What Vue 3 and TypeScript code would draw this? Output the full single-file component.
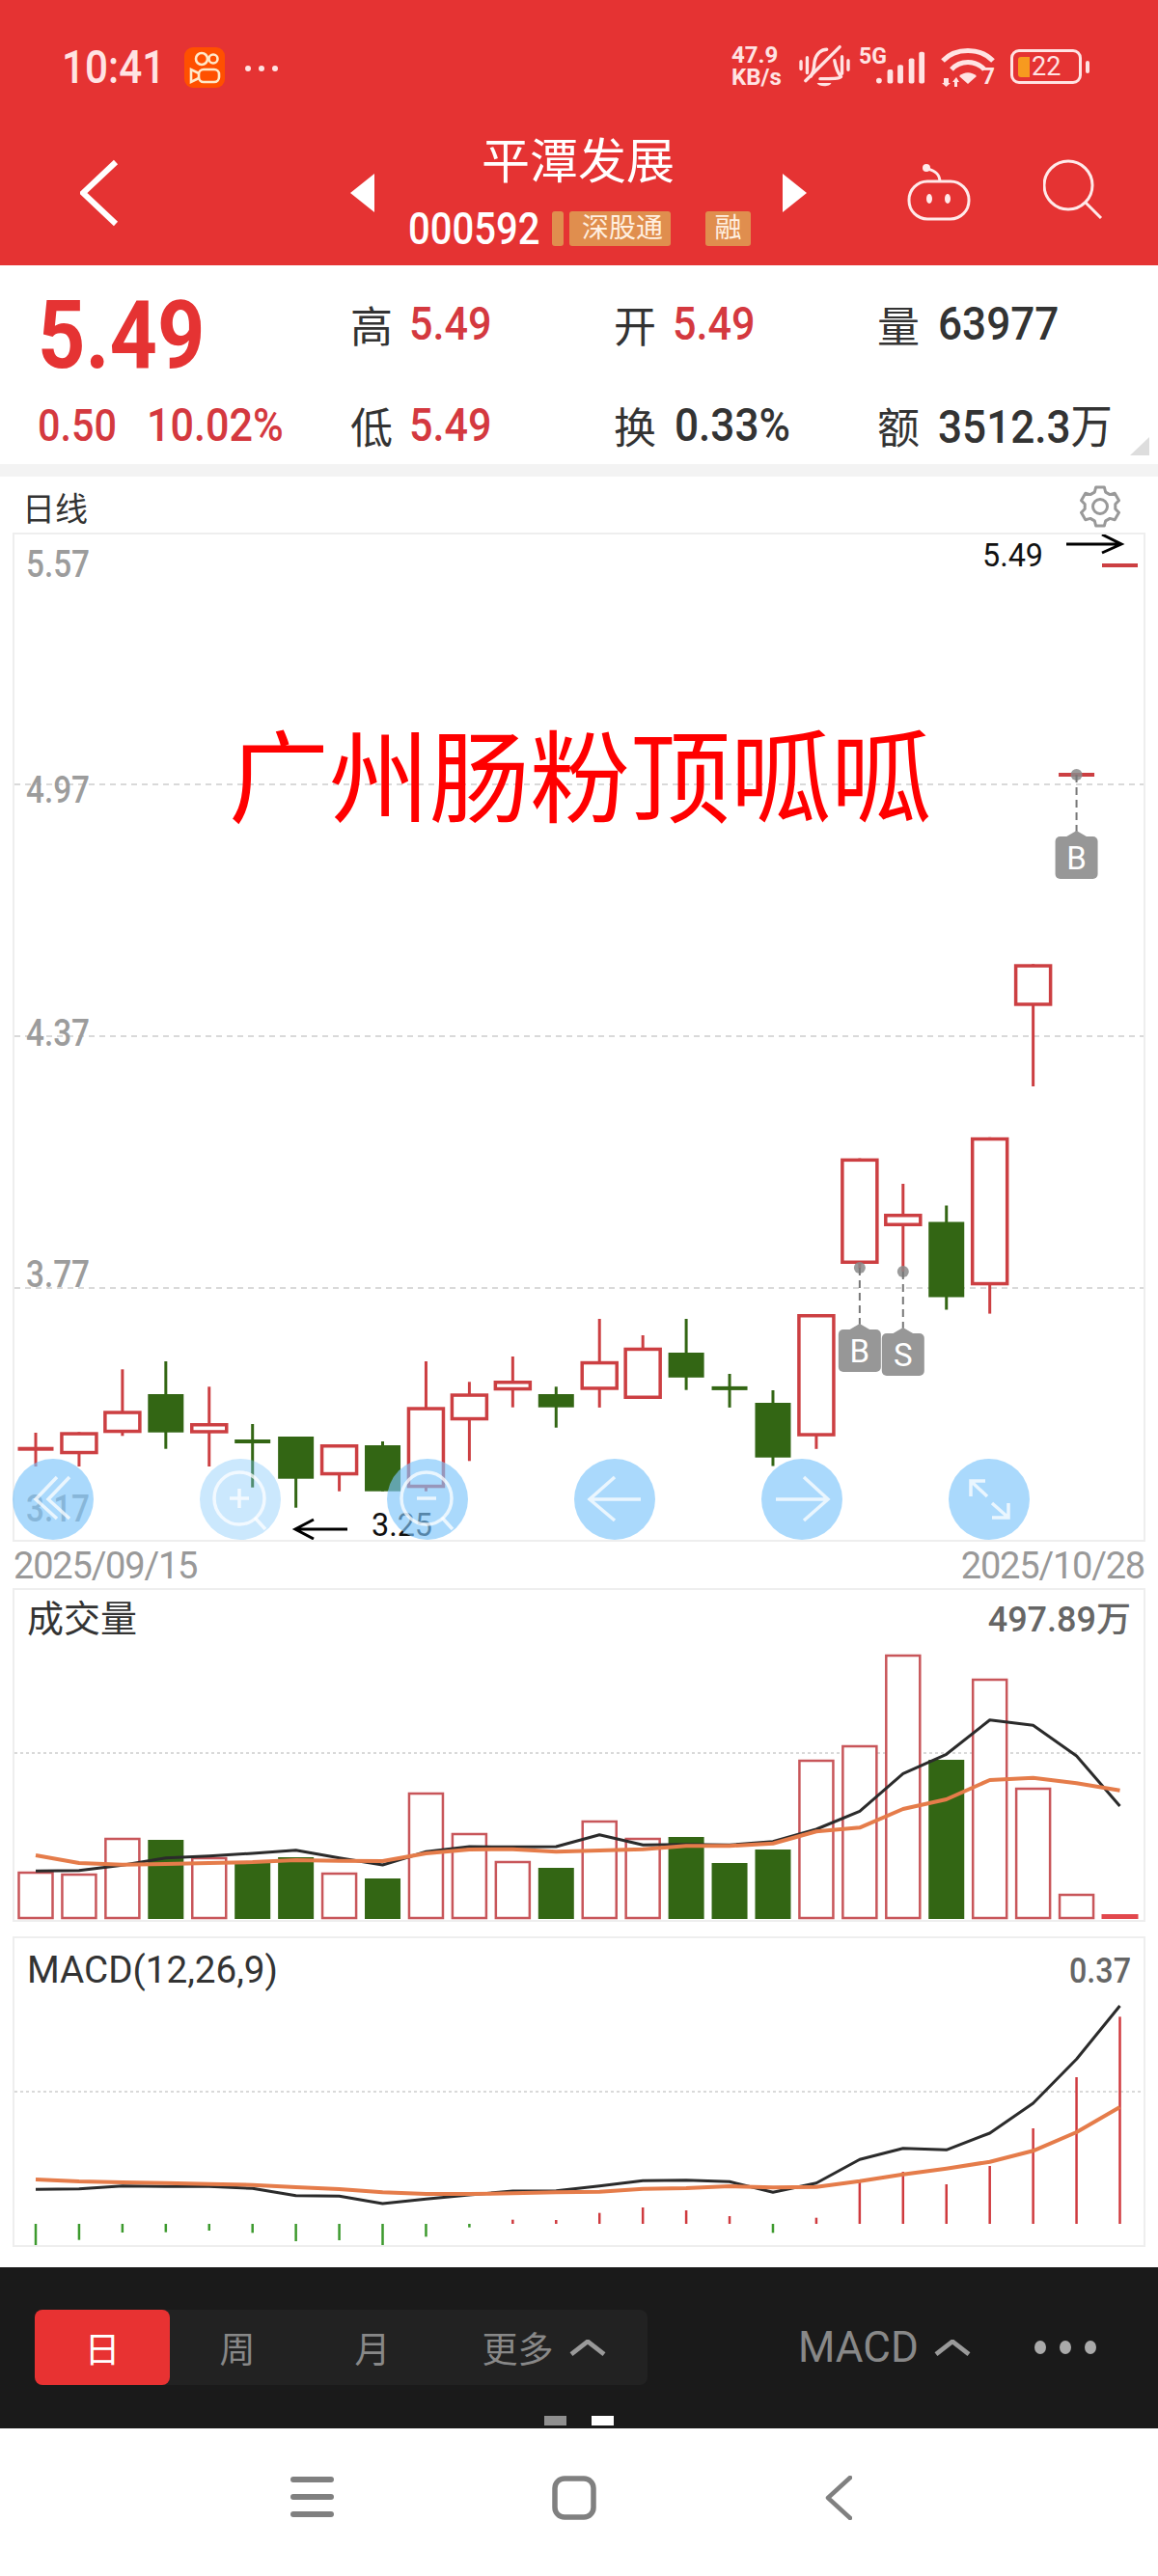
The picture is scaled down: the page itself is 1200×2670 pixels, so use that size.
<template>
  <div class="screen">
    <header class="top">
      <div class="status">
        <div class="status-left">
          <span class="time">10:41</span>
          <svg class="ks" viewBox="0 0 42 42">
            <rect width="42" height="42" rx="9" fill="#ff5000" />
            <g fill="none" stroke="#ffe9c9" stroke-width="2.6">
              <circle cx="18" cy="12" r="6" />
              <circle cx="30" cy="12" r="4.500" />
              <rect x="15" y="23" width="21" height="13" rx="5" />
              <path d="M15 27 L7 23 V36 L15 32" />
            </g>
          </svg>
          <span class="more-dots"><i></i><i></i><i></i></span>
        </div>
        <div class="status-right">
          <div class="speed"><span>47.9</span><span>KB/s</span></div>
          <svg class="bell" viewBox="235 35 160 135">
            <g fill="none" stroke="#ffe3e3" stroke-width="10" stroke-linecap="round" stroke-linejoin="round">
              <path d="M241 87V110M260 75V122M386 84V112M367 72V124" />
              <path d="M272 132C284 112 280 100 283 85C288 62 304 50 320 50M344 84C348 108 354 122 364 134C358 140 340 140 300 140" />
              <path d="M255 146L360 42" />
            </g>
            <path d="M290 153H334C330 166 296 166 290 153Z" fill="#ffe3e3" />
          </svg>
          <div class="net">
            <span class="five-g">5G</span>
            <svg class="bars" viewBox="0 0 54 36">
              <rect x="0" y="28" width="6" height="6" rx="3" />
              <rect x="12" y="19" width="6" height="15" rx="2" />
              <rect x="23" y="14" width="6" height="20" rx="2" />
              <rect x="35" y="7" width="6" height="27" rx="2" />
              <rect x="46" y="0" width="6" height="34" rx="2" />
            </svg>
          </div>
          <div class="wifi-wrap">
            <svg class="wifi" viewBox="0 0 56 42">
              <g fill="none" stroke="#ffe3e3" stroke-width="5">
                <path d="M2 15C15 1 41 1 54 15" />
                <path d="M11 24C20 14 36 14 45 24" />
              </g>
              <path d="M19 31C24 26 32 26 37 31L28 39Z" fill="#ffe3e3" />
              <path d="M3 33H8V38H10L5.500 42L1 38H3ZM14 42V37H12L16 32L19 37H17V42Z" fill="#ffe3e3" />
            </svg>
            <span class="wifi-num">7</span>
          </div>
          <div class="battery">
            <div class="cell"><i></i><span>22</span></div>
            <b></b>
          </div>
        </div>
      </div>
      <nav class="nav">
        <svg class="back" viewBox="0 0 40 70">
          <path d="M37 3L3 35L37 67" fill="none" stroke="#fff" stroke-width="6" />
        </svg>
        <span class="tri left"></span>
        <div class="title">
          <div class="name">平潭发展</div>
          <div class="code-row">
            <span class="code"><span>000592</span></span>
            <span class="tag sliver"></span>
            <span class="tag long">深股通</span>
            <span class="tag short">融</span>
          </div>
        </div>
        <span class="tri right"></span>
        <svg class="robot" viewBox="0 0 66 62">
          <g fill="none" stroke="#ffeaea" stroke-width="3">
            <path d="M34 22C34 14 30 10 21 8" />
            <rect x="2" y="21" width="62" height="39" rx="19" />
          </g>
          <circle cx="20" cy="7" r="4" fill="#ffeaea" />
          <ellipse cx="23" cy="39" rx="3" ry="5" fill="#ffeaea" />
          <ellipse cx="42" cy="39" rx="3" ry="5" fill="#ffeaea" />
        </svg>
        <svg class="search" viewBox="0 0 62 62">
          <g fill="none" stroke="#ffeaea" stroke-width="3">
            <ellipse cx="26" cy="27" rx="25" ry="25" />
            <path d="M44 45L60 61" />
          </g>
        </svg>
      </nav>
    </header>

    <section class="stats">
      <div class="price"><span class="num big">5.49</span></div>
      <div class="stat"><span class="lbl">高</span><span class="num up">5.49</span></div>
      <div class="stat"><span class="lbl">开</span><span class="num up">5.49</span></div>
      <div class="stat"><span class="lbl">量</span><span class="num dark">63977</span></div>
      <div class="change">
        <span class="num up chg">0.50</span>
        <span class="num up">10.02%</span>
      </div>
      <div class="stat"><span class="lbl">低</span><span class="num up">5.49</span></div>
      <div class="stat"><span class="lbl">换</span><span class="num dark">0.33%</span></div>
      <div class="stat"><span class="lbl">额</span><span class="num dark">3512.3<em>万</em></span></div>
      <span class="corner"></span>
    </section>

    <div class="band"></div>

    <div class="chart-head">
      <span>日线</span>
      <svg class="gear" viewBox="0 0 44 44">
        <path :d="gearPath" fill="none" stroke="#999" stroke-width="3" stroke-linejoin="round" />
        <circle cx="22" cy="22" r="7.500" fill="none" stroke="#999" stroke-width="3" />
      </svg>
    </div>

    <div class="box kline">
      <svg class="plot" width="1170" height="1042" viewBox="15 554 1170 1042">
        <line v-for="y in klineGrid" :key="y" x1="15" x2="1185" :y1="y" :y2="y" class="grid" />
        <text v-for="l in priceLabels" :key="l.t" x="27" :y="l.y" class="axis" textLength="66" lengthAdjust="spacingAndGlyphs">{{ l.t }}</text>
        <g v-for="c in candles" :key="c.i">
          <line :x1="c.x" :x2="c.x" :y1="c.hi" :y2="c.lo" :stroke="c.color" stroke-width="3" />
          <rect v-if="c.up && !c.flat" :x="c.x - 18" :y="c.top + 1.75" width="36" :height="c.bottom - c.top - 3.5" fill="#fff" :stroke="c.color" stroke-width="3.500" />
          <rect v-else-if="!c.flat" :x="c.x - 18.5" :y="c.top" width="37" :height="c.bottom - c.top" :fill="c.color" />
          <rect v-else :x="c.x - 18.5" :y="c.top - 2" width="37" height="4" :fill="c.color" />
        </g>
        <g v-for="m in marks" :key="m.x">
          <circle :cx="m.x" :cy="m.dot" r="6" fill="#8a8a8a" fill-opacity="0.85" />
          <line :x1="m.x" :x2="m.x" :y1="m.dot" :y2="m.tag" class="lead" />
          <path :d="`M${m.x - 12} ${m.tag + 1}L${m.x} ${m.tag - 6}L${m.x + 12} ${m.tag + 1}Z`" fill="#979797" />
          <rect :x="m.x - 22" :y="m.tag" width="44" height="44" rx="5" fill="#979797" />
          <text :x="m.x" :y="m.tag + 34" class="mark">{{ m.t }}</text>
        </g>
        <text x="1018" y="587" class="note" textLength="63" lengthAdjust="spacingAndGlyphs">5.49</text>
        <path d="M1105 564H1161M1142 554L1162 564L1142 573" class="pointer" />
        <path d="M360 1585H307M325 1575L306 1585L325 1595" class="pointer" />
        <text x="385" y="1592" class="note" textLength="63" lengthAdjust="spacingAndGlyphs">3.25</text>
      </svg>
      <div class="watermark">广州肠粉顶呱呱</div>
      <div class="buttons">
        <span class="fab">
          <svg viewBox="0 0 84 84"><path d="M59 19L37 42L59 62M46 19L24 42L46 62" /></svg>
        </span>
        <span class="fab pale">
          <svg viewBox="0 0 84 84"><ellipse cx="41" cy="41" rx="26" ry="27" /><path d="M57 61L68 73M41 31V51M31 41H51" /></svg>
        </span>
        <span class="fab">
          <svg viewBox="0 0 84 84"><ellipse cx="41" cy="41" rx="26" ry="27" /><path d="M57 61L68 73M31 41H51" /></svg>
        </span>
        <span class="fab">
          <svg viewBox="0 0 84 84"><path d="M69 42H16M42 19L16 42L42 64" /></svg>
        </span>
        <span class="fab">
          <svg viewBox="0 0 84 84"><path d="M15 42H69M44 19L69 42L44 64" /></svg>
        </span>
        <span class="fab">
          <svg viewBox="0 0 84 84"><path d="M40 39L23 23M23 39V23H38M45 46L62 61M45 61H62V46" /></svg>
        </span>
      </div>
    </div>

    <div class="dates"><span>2025/09/15</span><span>2025/10/28</span></div>

    <div class="box volume">
      <svg class="plot" width="1170" height="342" viewBox="15 1648 1170 342">
        <line x1="15" x2="1185" y1="1817" y2="1817" class="grid fine" />
        <template v-for="b in volumes" :key="b.i">
          <rect v-if="b.kind === 'up'" :x="b.x - 17.5" :y="b.top" width="35" :height="1988 - b.top" class="vol-up" />
          <rect v-else-if="b.kind === 'down'" :x="b.x - 18.500" :y="b.top" width="37" :height="1989 - b.top" fill="#336614" />
          <rect v-else :x="b.x - 19" :y="b.top" width="38" :height="1989 - b.top" fill="#e2484d" />
        </template>
        <polyline :points="volBlack" class="line black" />
        <polyline :points="volOrange" class="line orange" />
        <text x="28" y="1691" class="panel-title">成交量</text>
        <text x="1172" y="1691" class="panel-value" text-anchor="end">497.89万</text>
      </svg>
    </div>

    <div class="box macd">
      <svg class="plot" width="1170" height="318" viewBox="15 2009 1170 318">
        <line x1="15" x2="1185" y1="2168" y2="2168" class="grid fine" />
        <line v-for="h in histogram" :key="h.i" :x1="h.x" :x2="h.x" y1="2305" :y2="h.y" :stroke="h.color" stroke-width="2.500" />
        <polyline :points="macdBlack" class="line black" />
        <polyline :points="macdOrange" class="line orange" />
        <text x="28" y="2055" class="panel-title" textLength="260" lengthAdjust="spacingAndGlyphs">MACD(12,26,9)</text>
        <text x="1108" y="2055" class="panel-value" textLength="64" lengthAdjust="spacingAndGlyphs">0.37</text>
      </svg>
    </div>

    <footer class="toolbar">
      <div class="tool-row">
        <div class="periods">
          <span class="period active">日</span>
          <span class="period">周</span>
          <span class="period">月</span>
          <span class="period wide">更多
            <svg class="caret" viewBox="0 0 40 18"><path d="M2 16L20 2L38 16" /></svg>
          </span>
        </div>
        <span class="indicator">MACD
          <svg class="caret" viewBox="0 0 40 18"><path d="M2 16L20 2L38 16" /></svg>
        </span>
        <span class="tool-dots"><i></i><i></i><i></i></span>
      </div>
      <div class="pager"><i></i><i class="on"></i></div>
    </footer>

    <div class="sysnav">
      <svg class="sys menu" viewBox="0 0 45 46">
        <path d="M3 4H42M3 22H42M3 40H42" />
      </svg>
      <svg class="sys home" viewBox="0 0 46 46">
        <rect x="3" y="3" width="40" height="40" rx="10" />
      </svg>
      <svg class="sys backnav" viewBox="0 0 28 46">
        <path d="M26 2L3 23L26 44" />
      </svg>
    </div>
  </div>
</template>

<script setup lang="ts">
const RED = '#cc3f42'
const GREEN = '#336614'
const slot = (i: number) => 37 + 44.94 * i

// top, bottom, high, low in page pixels
const raw: [number, number, number, number, boolean][] = [
  [1501.7, 1501.7, 1485, 1520, true],
  [1484.3, 1507.3, 1484.3, 1520, true],
  [1462.3, 1485.3, 1419.3, 1488.3, true],
  [1445, 1484.7, 1411, 1501.7, false],
  [1475, 1485.7, 1437.3, 1520, true],
  [1494, 1494, 1476, 1541.7, false],
  [1489, 1532.7, 1489, 1562.7, false],
  [1497, 1529.3, 1497, 1545.7, true],
  [1498, 1545.7, 1494, 1545.7, false],
  [1458.3, 1542.3, 1411, 1545.7, true],
  [1444.3, 1472.3, 1432.3, 1514.3, true],
  [1431, 1441.3, 1406, 1458.7, true],
  [1445, 1458.7, 1437.3, 1479.7, false],
  [1410.8, 1440.7, 1367, 1458.9, true],
  [1396.7, 1450, 1384, 1450, true],
  [1402, 1427.8, 1367, 1440.7, false],
  [1438.9, 1438.9, 1424, 1458.9, false],
  [1454, 1510.7, 1441, 1519.5, false],
  [1362, 1488.8, 1362, 1501.8, true],
  [1200.6, 1310, 1200.6, 1314.6, true],
  [1258, 1271, 1227, 1318, true],
  [1266.5, 1344.5, 1249.5, 1357.5, false],
  [1178.8, 1332.3, 1178.8, 1361.6, true],
  [999.3, 1042.7, 999.3, 1126, true],
  [803, 803, 803, 803, true],
  [586, 586, 586, 586, true]
]

const candles = raw.map(([top, bottom, hi, lo, up], i) => ({
  i,
  x: slot(i),
  top,
  bottom,
  hi,
  lo,
  up,
  flat: top === bottom,
  color: up ? RED : GREEN
}))

const klineGrid = [813, 1074, 1335]

const priceLabels = [
  { t: '5.57', y: 598 },
  { t: '4.97', y: 832 },
  { t: '4.37', y: 1084 },
  { t: '3.77', y: 1334 },
  { t: '3.17', y: 1577 }
]

const marks = [
  { x: slot(19), dot: 1314, tag: 1378, t: 'B' },
  { x: slot(20), dot: 1318, tag: 1382, t: 'S' },
  { x: slot(24), dot: 803, tag: 867, t: 'B' }
]

const volTops = [1941, 1943, 1906, 1907, 1926, 1929, 1925, 1942, 1947, 1859, 1901, 1930, 1936, 1888, 1906, 1904, 1931, 1917, 1825, 1810, 1716, 1824, 1741, 1854, 1964, 1984]
const volumes = volTops.map((top, i) => ({
  i,
  x: slot(i),
  top,
  kind: i === 25 ? 'flat' : raw[i][4] ? 'up' : 'down'
}))

const line = (vals: number[], base: number) =>
  vals.map((v, i) => `${slot(i).toFixed(1)},${(base + v / 3).toFixed(1)}`).join(' ')

const volBlack = line([838, 836, 820, 797, 791, 783, 773, 797, 819, 778, 762, 763, 762, 725, 757, 755, 757, 746, 708, 652, 535, 475, 368, 385, 480, 636], 1660)
const volOrange = line([789, 813, 818, 816, 813, 810, 804, 806, 807, 783, 771, 770, 778, 774, 770, 760, 760, 752, 715, 703, 645, 615, 555, 548, 565, 587], 1660)
const macdBlack = line([808, 806, 797, 799, 799, 805, 827, 829, 852, 838, 825, 813, 812, 797, 781, 779, 784, 817, 788, 715, 680, 685, 633, 540, 403, 237], 2000)
const macdOrange = line([777, 783, 786, 788, 791, 794, 801, 807, 817, 822, 822, 820, 817, 815, 806, 804, 798, 802, 800, 782, 761, 743, 722, 688, 630, 552], 2000)

const histEnds = [983, 965, 942, 941, 936, 943, 969, 966, 983, 955, 926, 902, 903, 881, 864, 873, 891, 943, 896, 785, 753, 792, 735, 618, 459, 271]
const histogram = histEnds.map((z, i) => ({
  i,
  x: slot(i),
  y: 2000 + z / 3,
  color: z > 916 ? '#3d9a2e' : '#cf3a3e'
}))

const gearPath = (() => {
  const pts: string[] = []
  for (let k = 0; k < 6; k++) {
    const a = -90 + 60 * k
    const spots: [number, number][] = [[16, a - 21], [20.5, a - 12], [20.5, a + 12], [16, a + 21]]
    for (const [r, deg] of spots) {
      const rad = (deg * Math.PI) / 180
      pts.push(`${(22 + r * Math.cos(rad)).toFixed(1)} ${(22 + r * Math.sin(rad)).toFixed(1)}`)
    }
  }
  return `M${pts.join('L')}Z`
})()
</script>

<style>
html,
body {
  margin: 0;
  background: #fff;
}
</style>

<style scoped>
.screen {
  width: 1200px;
  height: 2670px;
  overflow: hidden;
  background: #fff;
  font-family: Roboto, "Noto Sans CJK SC", sans-serif;
}

/* header */
.top {
  height: 275px;
  background: #e53333;
  color: #fff;
  box-sizing: border-box;
  padding-top: 45px;
}
.status {
  display: flex;
  justify-content: space-between;
  height: 48px;
  padding: 0 71px 0 64px;
}
.status-left {
  display: flex;
  align-items: center;
}
.time {
  width: 127px;
  font-size: 48px;
  font-weight: 500;
  color: #ffe3e3;
  transform: scaleX(0.88);
  transform-origin: left center;
}
.ks {
  width: 42px;
  height: 42px;
  margin-top: 2px;
}
.more-dots {
  display: flex;
  gap: 8px;
  margin: 4px 0 0 21px;
}
.more-dots i {
  width: 6px;
  height: 6px;
  border-radius: 50%;
  background: #ffe3e3;
}
.status-right {
  display: flex;
  align-items: center;
  color: #ffe3e3;
}
.speed {
  display: flex;
  flex-direction: column;
  width: 70px;
  font-size: 24px;
  font-weight: 700;
  line-height: 23px;
}
.bell {
  width: 54px;
  height: 46px;
}
.net {
  display: flex;
  width: 70px;
  height: 46px;
  margin-left: 8px;
}
.five-g {
  width: 18px;
  font-size: 23px;
  font-weight: 700;
  line-height: 26px;
  white-space: nowrap;
}
.bars {
  width: 52px;
  height: 36px;
  margin-top: 7px;
  fill: #ffe3e3;
}
.wifi-wrap {
  position: relative;
  width: 56px;
  height: 42px;
  margin-left: 15px;
}
.wifi {
  display: block;
  width: 56px;
  height: 42px;
}
.wifi-num {
  position: absolute;
  right: 0;
  bottom: 0;
  font-size: 23px;
  font-weight: 700;
  line-height: 20px;
}
.battery {
  display: flex;
  align-items: center;
  margin-left: 16px;
}
.cell {
  display: flex;
  align-items: center;
  box-sizing: border-box;
  width: 74px;
  height: 36px;
  padding: 0 5px;
  border: 3px solid #ffe3e3;
  border-radius: 9px;
}
.cell i {
  width: 12px;
  height: 21px;
  border-radius: 3px 0 0 3px;
  background: #f79a1f;
}
.cell span {
  margin-left: 2px;
  font-size: 27px;
}
.battery b {
  width: 4px;
  height: 13px;
  margin-left: 4px;
  border-radius: 2px;
  background: #ffe3e3;
}
.nav {
  display: flex;
  align-items: flex-start;
  padding: 52px 0 0 83px;
}
.back {
  width: 40px;
  height: 70px;
  margin-top: 20px;
}
.tri {
  width: 0;
  height: 0;
  margin-top: 35px;
  border-top: 20px solid transparent;
  border-bottom: 20px solid transparent;
}
.tri.left {
  margin-left: 240px;
  border-right: 25px solid #fff;
}
.tri.right {
  border-left: 25px solid #fff;
}
.title {
  width: 423px;
  box-sizing: border-box;
  padding-left: 35px;
}
.name {
  height: 72px;
  padding-left: 76px;
  font-size: 50px;
  line-height: 46px;
  white-space: nowrap;
}
.code-row {
  display: flex;
  align-items: center;
  height: 36px;
  margin-top: 2px;
}
.code {
  width: 149px;
  font-size: 46px;
  font-weight: 500;
  line-height: 36px;
}
.code span {
  display: inline-block;
  transform: scaleX(0.87);
  transform-origin: left center;
}
.tag {
  height: 36px;
  border-radius: 3px;
  background: #e08e4e;
  color: #ffefe0;
  font-size: 28px;
  line-height: 36px;
  text-align: center;
  box-sizing: border-box;
}
.sliver {
  width: 12px;
  margin-right: 6px;
}
.long {
  width: 105px;
  padding-left: 5px;
}
.short {
  width: 47px;
  margin-left: 36px;
}
.robot {
  width: 66px;
  height: 62px;
  margin: 22px 0 0 104px;
}
.search {
  width: 62px;
  height: 62px;
  margin: 20px 0 0 75px;
}

/* quote numbers */
.stats {
  position: relative;
  display: grid;
  grid-template-columns: 324px 273px 273px 1fr;
  grid-template-rows: 85px 83px;
  row-gap: 20px;
  box-sizing: border-box;
  height: 206px;
  padding: 18px 0 0 39px;
}
.num {
  display: inline-block;
  font-size: 49px;
  font-weight: 500;
  line-height: 85px;
  white-space: nowrap;
  transform: scaleX(0.88);
  transform-origin: left center;
}
.num em {
  font-family: "Noto Sans CJK SC", sans-serif;
  font-size: 48px;
  font-style: normal;
  font-weight: 400;
}
.price {
  height: 85px;
}
.big {
  margin-top: 12px;
  font-size: 98px;
  font-weight: 700;
  color: #e53333;
}
.up {
  color: #d4393f;
}
.dark {
  margin-left: 2px;
  color: #333;
  transform: scaleX(0.9);
}
.stat {
  display: flex;
  align-items: center;
  height: 85px;
}
.lbl {
  width: 61px;
  font-size: 44px;
  color: #333;
}
.change {
  display: flex;
  height: 85px;
}
.chg {
  width: 113px;
  font-size: 47px;
}
.corner {
  position: absolute;
  right: 9px;
  bottom: 9px;
  width: 0;
  height: 0;
  border-left: 20px solid transparent;
  border-bottom: 19px solid #ddd;
}
.band {
  height: 13px;
  background: #f3f3f3;
}

/* charts */
.chart-head {
  display: flex;
  align-items: center;
  justify-content: space-between;
  box-sizing: border-box;
  height: 58px;
  padding: 4px 38px 0 23px;
  font-size: 34px;
  color: #333;
}
.gear {
  width: 44px;
  height: 44px;
}
.box {
  position: relative;
  width: 1170px;
  margin: 0 13px;
  border: 2px solid #eee;
}
.plot {
  display: block;
}
.grid {
  stroke: #d9d9d9;
  stroke-width: 2;
  stroke-dasharray: 6 5;
}
.grid.fine {
  stroke-dasharray: 3 3;
}
.axis {
  font-size: 38px;
  font-weight: 500;
  fill: #9c9c9c;
}
.note {
  font-size: 33px;
  fill: #111;
}
.pointer {
  fill: none;
  stroke: #000;
  stroke-width: 3;
}
.lead {
  stroke: #777;
  stroke-width: 2;
  stroke-dasharray: 8 5;
}
.mark {
  font-size: 33px;
  fill: #fff;
  text-anchor: middle;
}
.watermark {
  position: absolute;
  left: 222px;
  top: 194px;
  font-family: "Noto Sans CJK SC", sans-serif;
  font-size: 104px;
  line-height: 104px;
  color: #f00;
  white-space: nowrap;
}
.buttons {
  position: absolute;
  left: -2px;
  bottom: 0;
  display: flex;
  gap: 110px;
}
.fab {
  width: 84px;
  height: 84px;
  border-radius: 50%;
  background: rgba(125, 197, 250, 0.65);
}
.fab.pale {
  background: rgba(125, 197, 250, 0.4);
}
.fab svg {
  display: block;
  width: 84px;
  height: 84px;
  fill: none;
  stroke: #fff;
  stroke-opacity: 0.75;
  stroke-width: 3.500;
}
.dates {
  display: flex;
  justify-content: space-between;
  height: 48px;
  padding: 0 14px;
  font-size: 38px;
  line-height: 50px;
  letter-spacing: -1.2px;
  color: #999;
}
.volume {
  margin-bottom: 15px;
}
.vol-up {
  fill: #fff;
  stroke: #c8565a;
  stroke-width: 2.500;
}
.line {
  fill: none;
  stroke-linejoin: round;
}
.black {
  stroke: #2b2b2b;
  stroke-width: 3;
}
.orange {
  stroke: #e57c4a;
  stroke-width: 4;
}
.panel-title {
  font-size: 38px;
  fill: #333;
}
.panel-value {
  font-size: 36px;
  font-weight: 500;
  fill: #666;
}

/* bottom bars */
.toolbar {
  margin-top: 21px;
  height: 167px;
  box-sizing: border-box;
  padding-top: 44px;
  background: #1a1a1a;
  color: #888;
}
.tool-row {
  display: flex;
  align-items: center;
  height: 78px;
  padding-left: 36px;
}
.periods {
  display: flex;
  width: 635px;
  height: 78px;
  border-radius: 8px;
  background: #222;
}
.period {
  display: flex;
  align-items: center;
  justify-content: center;
  width: 140px;
  height: 78px;
  font-size: 37px;
}
.period.active {
  border-radius: 8px;
  background: #e83232;
  color: #fff;
}
.period.wide {
  gap: 16px;
  width: 215px;
  box-sizing: border-box;
}
.caret {
  width: 38px;
  height: 17px;
  fill: none;
  stroke: #9a9a9a;
  stroke-width: 5;
}
.indicator {
  display: flex;
  align-items: center;
  gap: 16px;
  margin-left: 156px;
  font-size: 44px;
}
.tool-dots {
  display: flex;
  gap: 14px;
  margin-left: 66px;
}
.tool-dots i {
  width: 12px;
  height: 14px;
  border-radius: 50%;
  background: #aaa;
}
.pager {
  display: flex;
  justify-content: center;
  gap: 26px;
  margin-top: 32px;
}
.pager i {
  width: 23px;
  height: 10px;
  background: #8f8f8f;
}
.pager i.on {
  background: #fff;
}
.sysnav {
  display: flex;
  align-items: flex-start;
  height: 153px;
  box-sizing: border-box;
  padding: 49px 0 0 301px;
}
.sys {
  height: 46px;
  fill: none;
  stroke: #808080;
  stroke-linecap: round;
  stroke-linejoin: round;
}
.menu {
  width: 45px;
  stroke-width: 6;
}
.home {
  width: 46px;
  margin-left: 226px;
  stroke-width: 5.500;
}
.backnav {
  width: 28px;
  margin-left: 237px;
  stroke-width: 4.500;
}
</style>
